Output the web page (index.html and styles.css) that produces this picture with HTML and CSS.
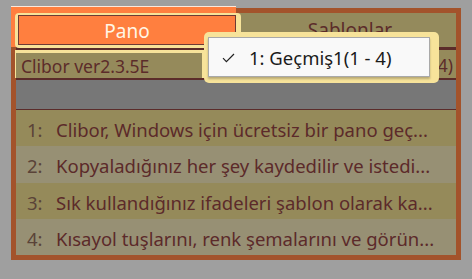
FILE: index.html
```html
<!DOCTYPE html>
<html>
<head>
<meta charset="utf-8">
<link rel="stylesheet" href="styles.css">
</head>
<body>
<div class="window">
  <div class="tabs">
    <div class="tab tab-active">
      <div class="focus">
        <div class="tab-label">Pano</div>
      </div>
    </div>
    <div class="tab tab-other">Sablonlar</div>
  </div>
  <div class="rule rule-3"></div>
  <div class="status">
    <div class="status-hl">Clibor ver2.3.5E</div>
    <div class="status-count">(1/4)</div>
  </div>
  <div class="rule rule-2"></div>
  <div class="blank"></div>
  <div class="rule rule-1"></div>
  <div class="list">
    <div class="row row-a"><span class="num">1:</span><span class="txt">Clibor, Windows için ücretsiz bir pano geç...</span></div>
    <div class="row row-b"><span class="num">2:</span><span class="txt">Kopyaladığınız her şey kaydedilir ve istedi...</span></div>
    <div class="row row-a"><span class="num">3:</span><span class="txt">Sık kullandığınız ifadeleri şablon olarak ka...</span></div>
    <div class="row row-b"><span class="num">4:</span><span class="txt">Kısayol tuşlarını, renk şemalarını ve görün...</span></div>
  </div>
  <div class="popup-glow">
    <div class="popup">
      <svg class="check" width="13" height="10" viewBox="0 0 13 10"><path d="M1 5.2 L4.4 8.6 L12 1" fill="none" stroke="#222" stroke-width="1.2"/></svg>
      <span class="popup-text">1: Geçmiş1(1 - 4)</span>
    </div>
  </div>
</div>
</body>
</html>
```

FILE: styles.css
```css
* { box-sizing: border-box; }
html, body { margin: 0; padding: 0; }
body {
  background: #9f9f9f;
  width: 472px;
  height: 279px;
  overflow: hidden;
  font-family: "Noto Sans", "Open Sans", sans-serif;
}
.window {
  position: relative;
  margin: 8px 0 0 11px;
  width: 450px;
  height: 252px;
  border: 5px solid #a3532b;
  display: flex;
  flex-direction: column;
  background: #958a5b;
}
.tabs {
  display: flex;
  height: 34px;
  background: #948a5c;
}
.tab-active {
  position: relative;
  z-index: 2;
  width: 225px;
  height: 41px;
  margin: -7px 0 0 -5px;
  background: #ff7f3f;
  border-top: 1px solid #fbe9dc;
  padding: 6px 0 0 4px;
}
.focus {
  width: 226px;
  height: 35px;
  background: #f7e39a;
  border-radius: 4px;
  padding: 2px 5px 3px 3px;
}
.tab-label {
  height: 30px;
  border: 1px solid #6e3b35;
  background: #ff7f3f;
  color: #fff6e6;
  font-size: 19px;
  line-height: 28px;
  padding-top: 1px;
  text-align: center;
}
.tab-other {
  flex: 1;
  color: #5c2c2a;
  font-size: 19px;
  line-height: 26px;
  padding-top: 4px;
  text-align: center;
  padding-left: 8px;
}
.rule { background: #5b2c2a; }
.rule-3 { height: 3px; }
.rule-2 { height: 2px; }
.rule-1 { height: 1px; }
.status {
  height: 28px;
  display: flex;
  justify-content: space-between;
  background: #958a5b;
  color: #5c2c2a;
  font-size: 17.5px;
}
.status-hl {
  width: 189px;
  margin-left: -1px;
  border-top: 3px solid #f7e39a;
  border-right: 2px solid #f7e39a;
  border-left: 1px solid #f7e39a;
  padding-left: 5px;
  line-height: 27px;
}
.status-count {
  padding-right: 3px;
  line-height: 30px;
}
.blank {
  height: 29px;
  background: #777777;
}
.list {
  flex: 1;
  display: flex;
  flex-direction: column;
}
.row {
  flex: 1;
  display: flex;
  align-items: center;
  padding: 3px 0 0 11px;
  font-size: 18.5px;
  white-space: nowrap;
  overflow: hidden;
}
.row-a { background: #958a5a; }
.row-b { background: #979074; }
.num {
  width: 29px;
  color: #5a4338;
}
.txt { color: #5c2a2a; }
.popup-glow {
  position: absolute;
  z-index: 5;
  left: 188px;
  top: 19px;
  width: 235px;
  height: 51px;
  background: #f7e39a;
  border-radius: 5px;
  padding: 5px 0 0 4px;
}
.popup {
  width: 222px;
  height: 40px;
  background: #f9f9f9;
  border: 1px solid #a9a9a9;
  box-shadow: 0 2px 2px rgba(0,0,0,0.25);
  display: flex;
  align-items: center;
  padding-left: 13px;
  color: #1b1b1b;
}
.check { margin-top: 1px; }
.popup-text {
  margin-left: 14px;
  font-size: 18.5px;
}
```
